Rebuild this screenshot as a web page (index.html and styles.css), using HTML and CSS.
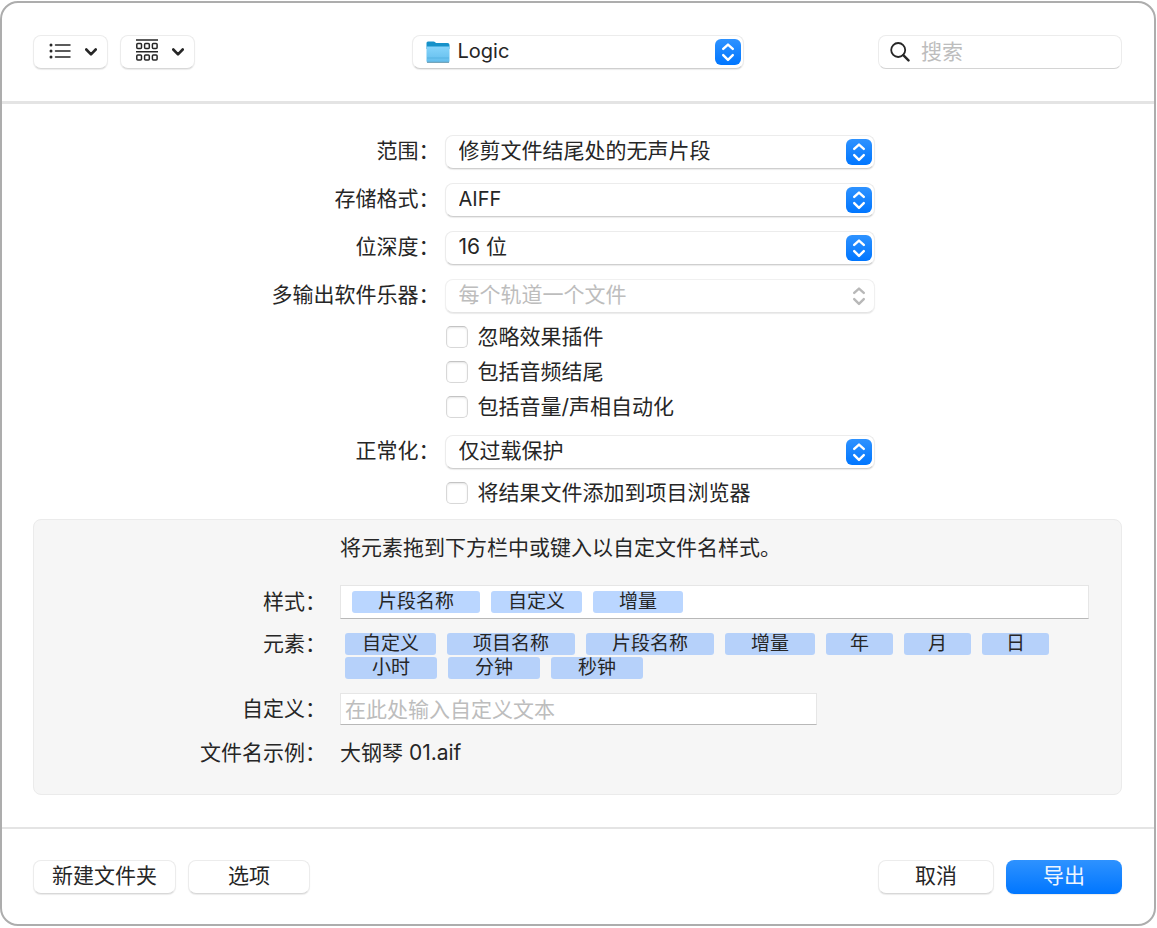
FILE: index.html
```html
<!DOCTYPE html>
<html lang="zh-CN">
<head>
<meta charset="utf-8">
<meta name="viewport" content="width=device-width, initial-scale=1">
<title>导出</title>
<link rel="stylesheet" href="styles.css">
</head>
<body>
<svg class="symbols" aria-hidden="true">
  <defs>
    <linearGradient id="blue" x1="0" y1="0" x2="0" y2="1">
      <stop offset="0" stop-color="#2e92ff"/><stop offset="1" stop-color="#0076ff"/>
    </linearGradient>
    <linearGradient id="folder-front" x1="0" y1="0" x2="0" y2="1">
      <stop offset="0" stop-color="#86d4fb"/><stop offset="1" stop-color="#62bdec"/>
    </linearGradient>
  </defs>
  <symbol id="arrows" viewBox="0 0 26 26">
    <path d="M8.2 9.900 13 5.600l4.800 4.300M8.200 16.100l4.800 4.800 4.800-4.800" fill="none" stroke="currentColor" stroke-width="2.400" stroke-linecap="round" stroke-linejoin="round"/>
  </symbol>
  <symbol id="chevron" viewBox="0 0 12 8">
    <path d="M1.300 1.500 6 6.300l4.700-4.800" fill="none" stroke="currentColor" stroke-width="2.600" stroke-linecap="round" stroke-linejoin="round"/>
  </symbol>
</svg>
<form class="dialog">
  <header class="toolbar">
    <div class="group">
      <button type="button" class="button view" aria-label="列表视图">
        <svg class="icon-list" viewBox="0 0 22 16">
          <g fill="currentColor"><circle cx="2" cy="2" r="1.500"/><circle cx="2" cy="8" r="1.500"/><circle cx="2" cy="14" r="1.500"/></g>
          <path d="M6.500 2h14.500M6.500 8h14.500M6.500 14h14.500" stroke="currentColor" stroke-width="1.500" stroke-linecap="round"/>
        </svg>
        <svg class="icon-chevron"><use href="#chevron"/></svg>
      </button>
      <button type="button" class="button view" aria-label="分组">
        <svg class="icon-group" viewBox="0 0 22 22">
          <g fill="none" stroke="currentColor" stroke-width="1.500">
            <path d="M0 1h22M0 12.700h22"/>
            <rect x=".8" y="4.500" width="4.700" height="5" rx="1"/><rect x="8.600" y="4.500" width="4.700" height="5" rx="1"/><rect x="16.400" y="4.500" width="4.700" height="5" rx="1"/>
            <rect x=".8" y="16" width="4.700" height="5" rx="1"/><rect x="8.600" y="16" width="4.700" height="5" rx="1"/><rect x="16.400" y="16" width="4.700" height="5" rx="1"/>
          </g>
        </svg>
        <svg class="icon-chevron"><use href="#chevron"/></svg>
      </button>
    </div>
    <div class="popup location">
      <select aria-label="位置"><option>Logic</option></select>
      <svg class="icon-folder" viewBox="0 0 24 22">
        <path d="M.5 2Q.5.5 2 .5h5.500q1 0 1.700.7l.8.700h11.500q2 0 2 2V8H.5Z" fill="#1691c9"/>
        <path d="M.5 5.500h23V20q0 1.500-1.500 1.500H2Q.5 21.500.5 20Z" fill="url(#folder-front)"/>
        <path d="M1 17h22" stroke="#56b3e2" stroke-width="1"/>
        <path d="M1 21.300h22" stroke="#6797ad" stroke-width="1"/>
      </svg>
      <svg class="stepper" viewBox="0 0 26 26"><rect width="26" height="26" rx="6" fill="url(#blue)"/><use href="#arrows"/></svg>
    </div>
    <label class="search">
      <svg class="icon-search" viewBox="0 0 20 20">
        <circle cx="8.200" cy="8" r="7" fill="none" stroke="currentColor" stroke-width="1.800"/>
        <path d="m13.300 13.200 5.200 5.200" stroke="currentColor" stroke-width="2.400" stroke-linecap="round"/>
      </svg>
      <input type="search" placeholder="搜索" aria-label="搜索">
    </label>
  </header>

  <main class="content">
    <div class="settings">
      <label for="range">范围：</label>
      <div class="popup">
        <select id="range"><option>修剪文件结尾处的无声片段</option></select>
        <svg class="stepper" viewBox="0 0 26 26"><rect width="26" height="26" rx="6" fill="url(#blue)"/><use href="#arrows"/></svg>
      </div>
      <label for="format">存储格式：</label>
      <div class="popup latin">
        <select id="format"><option>AIFF</option></select>
        <svg class="stepper" viewBox="0 0 26 26"><rect width="26" height="26" rx="6" fill="url(#blue)"/><use href="#arrows"/></svg>
      </div>
      <label for="depth">位深度：</label>
      <div class="popup">
        <select id="depth"><option>16 位</option></select>
        <svg class="stepper" viewBox="0 0 26 26"><rect width="26" height="26" rx="6" fill="url(#blue)"/><use href="#arrows"/></svg>
      </div>
      <label for="multi">多输出软件乐器：</label>
      <div class="popup disabled">
        <select id="multi" disabled><option>每个轨道一个文件</option></select>
        <svg class="stepper" viewBox="0 0 26 26"><use href="#arrows"/></svg>
      </div>
      <div class="checks">
        <label class="check"><input type="checkbox">忽略效果插件</label>
        <label class="check"><input type="checkbox">包括音频结尾</label>
        <label class="check"><input type="checkbox">包括音量/声相自动化</label>
      </div>
      <label for="normalize">正常化：</label>
      <div class="popup">
        <select id="normalize"><option>仅过载保护</option></select>
        <svg class="stepper" viewBox="0 0 26 26"><rect width="26" height="26" rx="6" fill="url(#blue)"/><use href="#arrows"/></svg>
      </div>
      <label class="check add"><input type="checkbox">将结果文件添加到项目浏览器</label>
    </div>

    <section class="naming">
      <p class="hint">将元素拖到下方栏中或键入以自定文件名样式。</p>
      <span class="name" id="pattern-name">样式：</span>
      <div class="pattern" role="group" aria-labelledby="pattern-name">
        <span class="token">片段名称</span>
        <span class="token narrow">自定义</span>
        <span class="token">增量</span>
      </div>
      <span class="name top" id="element-name">元素：</span>
      <div class="elements" role="group" aria-labelledby="element-name">
        <span class="token narrow" draggable="true">自定义</span>
        <span class="token" draggable="true">项目名称</span>
        <span class="token" draggable="true">片段名称</span>
        <span class="token" draggable="true">增量</span>
        <span class="token single" draggable="true">年</span>
        <span class="token single" draggable="true">月</span>
        <span class="token single" draggable="true">日</span>
        <span class="token time" draggable="true">小时</span>
        <span class="token time" draggable="true">分钟</span>
        <span class="token time" draggable="true">秒钟</span>
      </div>
      <label class="name" for="custom">自定义：</label>
      <input class="custom" id="custom" type="text" placeholder="在此处输入自定义文本">
      <span class="name">文件名示例：</span>
      <output class="example">大钢琴 01.aif</output>
    </section>
  </main>

  <footer class="actions">
    <div class="group">
      <button type="button" class="button">新建文件夹</button>
      <button type="button" class="button options">选项</button>
    </div>
    <div class="group">
      <button type="button" class="button">取消</button>
      <button type="submit" class="button primary">导出</button>
    </div>
  </footer>
</form>
</body>
</html>
```

FILE: styles.css
```css
* {
  box-sizing: border-box;
}

body {
  display: flex;
  min-height: 100vh;
  margin: 0;
  padding: 1px 1px 2px 0;
  background: #fff;
  color: #262626;
  font-family: Inter, "Noto Sans CJK SC", sans-serif;
  font-size: 21px;
  line-height: 28px;
}

button,
input,
select {
  margin: 0;
  color: inherit;
  font: inherit;
}

.symbols {
  position: absolute;
  width: 0;
  height: 0;
}

.dialog {
  display: flex;
  flex: 1;
  flex-direction: column;
  min-width: 0;
  border: 2px solid #adadad;
  border-radius: 18px;
}

.toolbar {
  display: grid;
  grid-template-columns: 1fr minmax(0, 332px) 1fr;
  align-items: center;
  padding: 32px 32px 32px 31px;
  border-bottom: 3px solid #e4e4e4;
}

.group {
  display: flex;
  gap: 12px;
}

.button {
  display: flex;
  align-items: center;
  justify-content: center;
  min-width: 116px;
  height: 34px;
  padding: 0 18px 2px;
  border: 1px solid #ececec;
  border-bottom-color: #d8d8d8;
  border-radius: 8px;
  background: #fff;
  box-shadow: 0 1px 1px #00000014;
}

.button.view {
  gap: 14px;
  min-width: 0;
  padding: 0 10px 0 15px;
}

.button.options {
  min-width: 122px;
}

.button.primary {
  border: 0;
  background: linear-gradient(#2e92ff, #0076ff);
  color: #eef5ff;
}

.icon-list {
  width: 22px;
  height: 16px;
  margin-bottom: 2px;
}

.icon-group {
  width: 22px;
  height: 22px;
  margin-bottom: 4px;
}

.icon-chevron {
  width: 12px;
  height: 8px;
}

.popup {
  display: grid;
  align-items: center;
  max-width: 430px;
}

.popup > * {
  grid-area: 1 / 1;
}

.popup select {
  width: 100%;
  height: 34px;
  padding: 0 40px 2px 13px;
  appearance: none;
  border: 1px solid #ececec;
  border-bottom-color: #cfcfcf;
  border-radius: 8px;
  background: #fff;
  box-shadow: 0 1px 1px #00000014;
}

.popup.latin select,
.popup.location select {
  font-size: 20px;
}

.popup.location select {
  padding-left: 45px;
}

.popup.disabled select {
  border-color: #f0f0f0;
  border-bottom-color: #e4e4e4;
  color: #bdbdbd;
  opacity: 1;
}

.stepper {
  justify-self: end;
  width: 26px;
  height: 26px;
  margin-right: 3px;
  color: #fff;
  pointer-events: none;
}

.disabled .stepper {
  color: #b8b8b8;
}

.icon-folder {
  width: 24px;
  height: 22px;
  margin-left: 14px;
  pointer-events: none;
}

.search {
  display: flex;
  align-items: center;
  justify-self: end;
  gap: 11px;
  width: 100%;
  max-width: 244px;
  height: 34px;
  padding: 0 11px;
  border: 1px solid #ececec;
  border-bottom-color: #d4d4d4;
  border-radius: 8px;
}

.search input {
  flex: 1;
  min-width: 0;
  padding: 0;
  border: 0;
  background: none;
  appearance: none;
}

.icon-search {
  width: 20px;
  height: 20px;
}

::placeholder {
  color: #bdbdbd;
  opacity: 1;
}

.content {
  flex: 1;
  padding: 30px 32px 32px 31px;
}

.settings {
  display: grid;
  grid-template-columns: 3fr 5fr;
  grid-auto-rows: minmax(22px, auto);
  align-items: center;
  gap: 12px 5px;
  margin-bottom: 15px;
}

.settings > label:not(.check) {
  padding-bottom: 2px;
  text-align: right;
}

.settings > .popup {
  height: 36px;
}

.checks {
  display: flex;
  flex-direction: column;
  grid-column: 2;
  gap: 13px;
  margin-bottom: 4px;
}

.check {
  display: flex;
  align-items: center;
  gap: 10px;
  height: 22px;
  line-height: 30px;
}

.check.add {
  grid-column: 2;
}

.check input {
  width: 22px;
  height: 22px;
  margin-left: 1px;
  appearance: none;
  border: 1px solid #d8d8d8;
  border-top-color: #c4c4c4;
  border-radius: 5px;
  background: #fff;
  box-shadow: inset 0 1px 2px #0000001a;
}

.naming {
  display: grid;
  grid-template-columns: minmax(auto, 292px) 1fr;
  align-items: center;
  gap: 14px;
  padding: 5px 32px 27px 0;
  border: 1px solid #ebebeb;
  border-radius: 8px;
  background: #f6f6f6;
}

.hint {
  grid-column: 2;
  margin: 0;
  line-height: 46px;
}

.name {
  text-align: right;
}

.name.top {
  align-self: start;
  line-height: 22px;
}

.pattern {
  display: flex;
  align-items: center;
  gap: 11px;
  height: 34px;
  padding: 0 11px;
  border: 1px solid #e6e6e6;
  border-bottom-color: #b8b8b8;
  background: #fff;
}

.elements {
  display: flex;
  flex-wrap: wrap;
  gap: 2px 11px;
  padding-left: 5px;
}

.token {
  padding: 0 26px;
  border-radius: 3px;
  background: #b6d1fa;
  font-size: 19px;
  line-height: 22px;
}

.pattern .token {
  background: #bad6ff;
}

.token.narrow {
  padding: 0 17px;
}

.token.single {
  padding: 0 24px;
}

.token.time {
  padding: 0 27px;
}

.custom {
  width: 100%;
  max-width: 477px;
  height: 32px;
  padding: 0 4px;
  border: 1px solid #e6e6e6;
  border-bottom-color: #b8b8b8;
  background: #fff;
}

.actions {
  display: flex;
  justify-content: space-between;
  padding: 31px 32px 30px 31px;
  border-top: 2px solid #e4e4e4;
}
```
